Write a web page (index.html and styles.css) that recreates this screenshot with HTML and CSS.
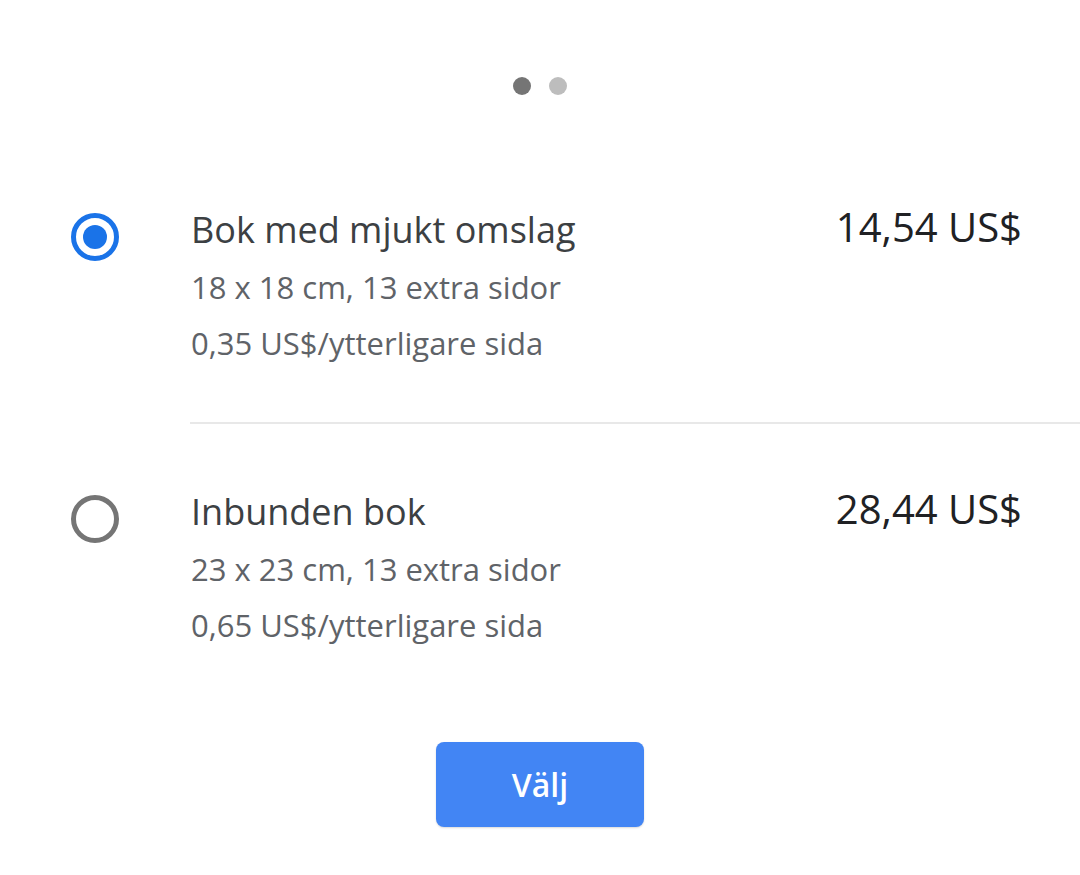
FILE: index.html
```html
<!DOCTYPE html>
<html lang="sv">
<head>
<meta charset="utf-8">
<link rel="stylesheet" href="styles.css">
</head>
<body>
<div class="page">
  <div class="dots">
    <span class="dot dot-active"></span>
    <span class="dot"></span>
  </div>
  <div class="options">
    <div class="option">
      <div class="radio-col">
        <span class="radio radio-on"><span class="radio-dot"></span></span>
      </div>
      <div class="info">
        <div class="title">Bok med mjukt omslag</div>
        <div class="sub">18 x 18 cm, 13 extra sidor</div>
        <div class="sub">0,35 US$/ytterligare sida</div>
      </div>
      <div class="price">14,54 US$</div>
    </div>
    <div class="divider"></div>
    <div class="option">
      <div class="radio-col">
        <span class="radio radio-off"></span>
      </div>
      <div class="info">
        <div class="title">Inbunden bok</div>
        <div class="sub">23 x 23 cm, 13 extra sidor</div>
        <div class="sub">0,65 US$/ytterligare sida</div>
      </div>
      <div class="price">28,44 US$</div>
    </div>
  </div>
  <div class="actions">
    <button class="btn">Välj</button>
  </div>
</div>
</body>
</html>
```
FILE: styles.css
```css
html, body {
  margin: 0;
  padding: 0;
  background: #ffffff;
}
body {
  font-family: "Open Sans", Roboto, "Liberation Sans", sans-serif;
  width: 1080px;
  height: 875px;
  overflow: hidden;
}
.page {
  display: flex;
  flex-direction: column;
  padding-top: 77px;
}
.dots {
  display: flex;
  justify-content: center;
  gap: 18px;
  height: 18px;
}
.dot {
  width: 18px;
  height: 18px;
  border-radius: 50%;
  background: #bdbdbd;
}
.dot-active {
  background: #757575;
}
.options {
  margin-top: 47px;
  display: flex;
  flex-direction: column;
}
.option {
  display: flex;
  align-items: flex-start;
  padding: 59px 58px 51px 71px;
}
.radio-col {
  width: 120px;
  padding-top: 12px;
  display: flex;
}
.radio {
  width: 48px;
  height: 48px;
  border-radius: 50%;
  box-sizing: border-box;
  border: 5px solid #757575;
  display: flex;
  align-items: center;
  justify-content: center;
}
.radio-on {
  border-color: #1a73e8;
}
.radio-dot {
  width: 24px;
  height: 24px;
  border-radius: 50%;
  background: #1a73e8;
}
.info {
  flex: 1;
  display: flex;
  flex-direction: column;
}
.title {
  font-size: 36px;
  line-height: 58px;
  color: #3c4043;
}
.sub {
  font-size: 31px;
  line-height: 56px;
  color: #5f6368;
}
.price {
  font-size: 40px;
  line-height: 58px;
  margin-top: -3px;
  color: #202124;
}
.divider {
  margin-left: 190px;
  height: 2px;
  background: #e8e8e8;
}
.actions {
  display: flex;
  justify-content: center;
  margin-top: 38px;
}
.btn {
  width: 208px;
  height: 85px;
  border: none;
  border-radius: 8px;
  background: #4285f4;
  color: #ffffff;
  font-family: "Open Sans", Roboto, sans-serif;
  font-weight: 600;
  font-size: 32px;
  box-shadow: 0 1px 2px rgba(0,0,0,0.15);
}
```
